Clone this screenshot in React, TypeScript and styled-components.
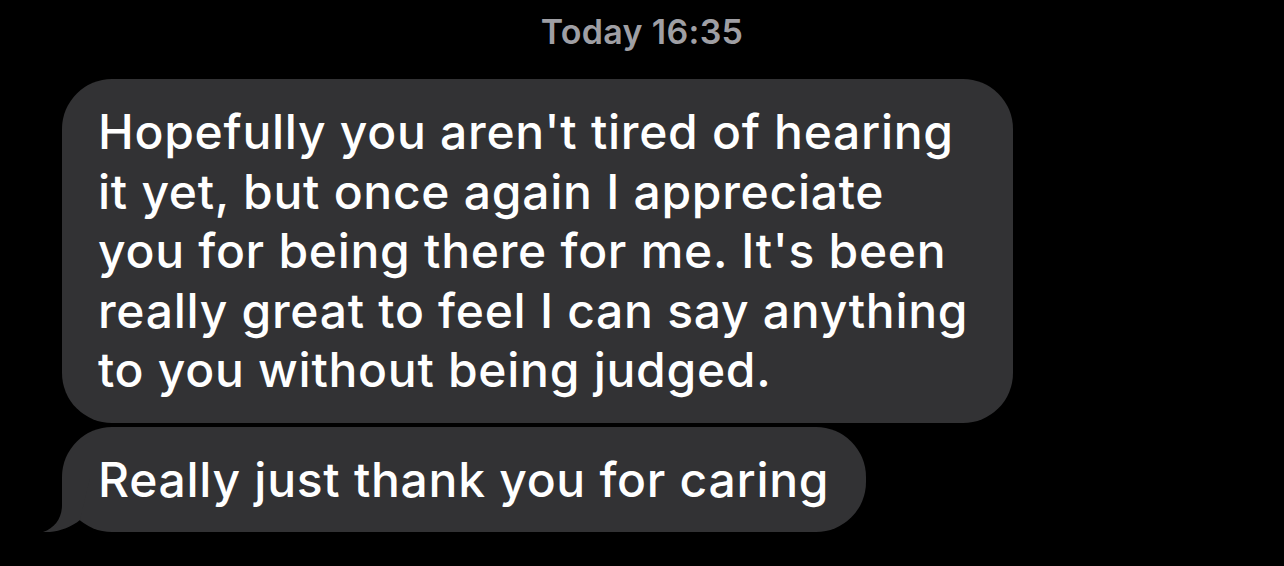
import React from "react";
import styled, { createGlobalStyle } from "styled-components";

const GlobalStyle = createGlobalStyle`
  html, body {
    margin: 0;
    padding: 0;
    background: #000000;
  }
  body {
    font-family: Inter, "Noto Sans", "Liberation Sans", sans-serif;
    -webkit-font-smoothing: antialiased;
  }
`;

const BUBBLE_GRAY = "#323234";

const Screen = styled.div`
  width: 1284px;
  height: 566px;
  background: #000000;
  padding-top: 12px;
  box-sizing: border-box;
  overflow: hidden;
`;

const Timestamp = styled.div`
  text-align: center;
  color: #9f9fa4;
  font-size: 34px;
  line-height: 40px;
  font-weight: 600;
  letter-spacing: 0.3px;
  margin-bottom: 27px;
`;

const Thread = styled.div`
  display: flex;
  flex-direction: column;
  align-items: flex-start;
  gap: 4px;
  padding-left: 62px;
`;

const Bubble = styled.div<{ $width?: number }>`
  position: relative;
  box-sizing: border-box;
  width: ${(p) => (p.$width ? `${p.$width}px` : "fit-content")};
  padding: 23px 37px 23px 36px;
  background: ${BUBBLE_GRAY};
  border-radius: 50px;
  color: #ffffff;
  font-size: 48px;
  line-height: 59.5px;
  font-weight: 500;
  letter-spacing: 0.72px;
  white-space: nowrap;
`;

const Tail = styled.svg`
  position: absolute;
  left: -20px;
  bottom: 0;
  width: 60px;
  height: 60px;
`;

const MessageTail: React.FC = () => (
  <Tail viewBox="0 0 60 60">
    <path
      d="M20,6 L20,33 C20,46 13,56 1,60 C14,61 28,56 38,48 L48,6 Z"
      fill={BUBBLE_GRAY}
    />
  </Tail>
);

const App: React.FC = () => {
  return (
    <>
      <GlobalStyle />
      <Screen>
        <Timestamp>Today 16:35</Timestamp>
        <Thread>
          <Bubble $width={951}>
            Hopefully you aren't tired of hearing
            <br />
            it yet, but once again I appreciate
            <br />
            you for being there for me. It's been
            <br />
            really great to feel I can say anything
            <br />
            to you without being judged.
          </Bubble>
          <Bubble>
            Really just thank you for caring
            <MessageTail />
          </Bubble>
        </Thread>
      </Screen>
    </>
  );
};

export default App;
